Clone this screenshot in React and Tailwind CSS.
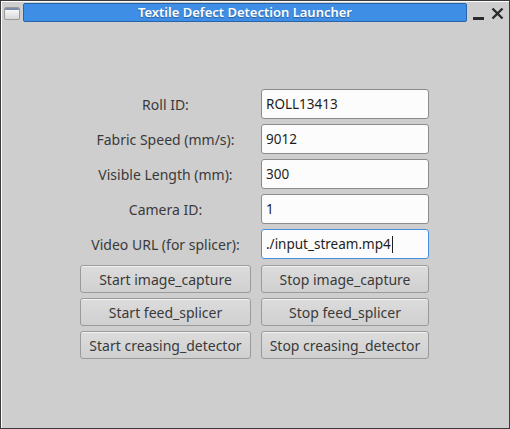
import React from 'react';

const fields = [
    { label: 'Roll ID:', value: 'ROLL13413' },
    { label: 'Fabric Speed (mm/s):', value: '9012' },
    { label: 'Visible Length (mm):', value: '300' },
    { label: 'Camera ID:', value: '1' },
    { label: 'Video URL (for splicer):', value: './input_stream.mp4', focused: true },
];

const services = ['image_capture', 'feed_splicer', 'creasing_detector'];

const TitleBar = () => (
    <div className="flex items-start h-[22px] pl-[2px] pr-[5px] pt-[1px]">
        {/* window menu icon */}
        <div className="w-[16px] h-[13px] mt-[4px] rounded-[2px] border border-[#9a9a9a] bg-gradient-to-b from-[#ffffff] to-[#d8d8d8] overflow-hidden">
            <div className="h-[2px] bg-[#7a8aa8]" />
        </div>
        <div className="ml-[3px] flex-1 h-[19px] rounded-[2px] border border-[#2a63a8] bg-[#3f8ee6] flex items-center justify-center">
            <span className="text-white text-[13px] font-semibold [text-shadow:0_1px_1px_rgba(0,0,0,0.35)]">
                Textile Defect Detection Launcher
            </span>
        </div>
        <div className="flex items-center gap-[7px] ml-[6px] mt-[4px]">
            <div className="w-[11px] h-[3px] bg-[#2b2b2b] mt-[10px]" />
            <svg width="13" height="13" viewBox="0 0 13 13">
                <path d="M1.5 1.5 L11.5 11.5 M11.5 1.5 L1.5 11.5" stroke="#2b2b2b" strokeWidth="2.4" />
            </svg>
        </div>
    </div>
);

const App = () => {
    return (
        <div
            className="w-[510px] h-[429px] bg-[#cecece] border border-[#3a3a3a] flex flex-col overflow-hidden"
            style={{ fontFamily: '"Noto Sans", "Open Sans", sans-serif' }}
        >
            <div className="flex-1 flex flex-col border-l border-t border-white">
                <TitleBar />
                <div className="grid grid-cols-[171px_168px] gap-x-[10px] mt-[65px] ml-[78px]">
                    {fields.map((f) => (
                        <React.Fragment key={f.label}>
                            <div className="h-[30px] mb-[5px] flex items-center justify-center text-[14px] text-[#3a3a3a]">
                                {f.label}
                            </div>
                            <div
                                className={`h-[30px] mb-[5px] rounded-[3px] bg-[#fcfcfc] border flex items-center px-[4px] text-[13.5px] text-[#1e1e1e] ${
                                    f.focused ? 'border-[#4a90e2]' : 'border-[#8c8c8c]'
                                }`}
                            >
                                <span>{f.value}</span>
                                {f.focused && <span className="w-px h-[17px] bg-[#1e1e1e] ml-px" />}
                            </div>
                        </React.Fragment>
                    ))}
                </div>
                <div className="grid grid-cols-[171px_168px] gap-x-[10px] gap-y-[5px] mt-[1px] ml-[78px]">
                    {services.map((s) => (
                        <React.Fragment key={s}>
                            <button className="h-[28px] rounded-[3px] border border-[#9a9a9a] bg-gradient-to-b from-[#dcdcdc] to-[#d0d0d0] text-[14px] text-[#3a3a3a] shadow-[inset_0_1px_0_rgba(255,255,255,0.6)]">
                                Start {s}
                            </button>
                            <button className="h-[28px] rounded-[3px] border border-[#9a9a9a] bg-gradient-to-b from-[#dcdcdc] to-[#d0d0d0] text-[14px] text-[#3a3a3a] shadow-[inset_0_1px_0_rgba(255,255,255,0.6)]">
                                Stop {s}
                            </button>
                        </React.Fragment>
                    ))}
                </div>
            </div>
        </div>
    );
};

export default App;
